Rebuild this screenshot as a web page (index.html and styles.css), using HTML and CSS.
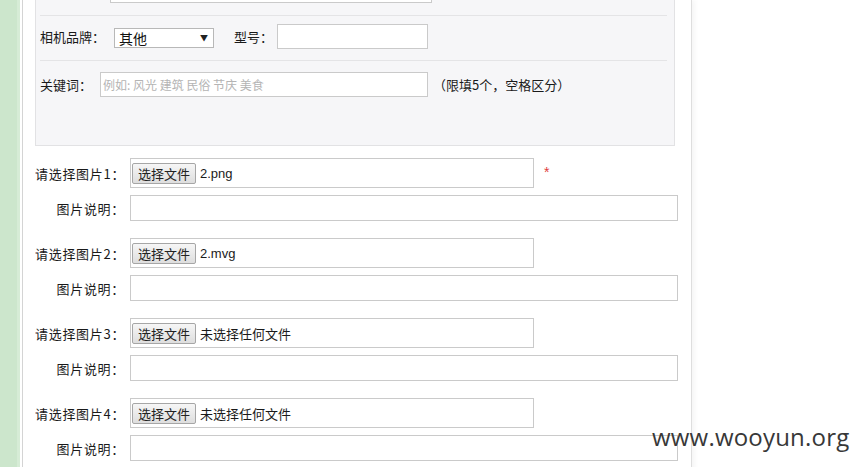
FILE: index.html
```html
<!DOCTYPE html>
<html lang="zh-CN">
<head>
<meta charset="utf-8">
<title>上传图片</title>
<link rel="stylesheet" href="styles.css">
</head>
<body>
<div class="page">
  <div class="sidebar"></div>
  <div class="main">
    <div class="panel">
      <div class="prow prow-first">
        <span class="plabel">拍摄地点：</span>
        <span class="text-input w-loc"></span>
      </div>
      <div class="prow prow-mid">
        <span class="plabel">相机品牌：</span>
        <span class="select"><span class="sel-text">其他</span><span class="sel-arrow">▼</span></span>
        <span class="plabel model-label">型号：</span>
        <span class="text-input w-model"></span>
      </div>
      <div class="prow prow-last">
        <span class="plabel">关键词：</span>
        <span class="text-input w-kw"><span class="placeholder">例如: 风光 建筑 民俗 节庆 美食</span></span>
        <span class="hint">（限填5个，空格区分）</span>
      </div>
    </div>

    <div class="uploads">
      <div class="group">
        <div class="frow">
          <span class="flabel">请选择图片1：</span>
          <span class="file-box"><span class="file-btn">选择文件</span><span class="file-name latin">2.png</span></span>
          <span class="req">*</span>
        </div>
        <div class="frow">
          <span class="flabel">图片说明：</span>
          <span class="text-input desc"></span>
        </div>
      </div>
      <div class="group">
        <div class="frow">
          <span class="flabel">请选择图片2：</span>
          <span class="file-box"><span class="file-btn">选择文件</span><span class="file-name latin">2.mvg</span></span>
        </div>
        <div class="frow">
          <span class="flabel">图片说明：</span>
          <span class="text-input desc"></span>
        </div>
      </div>
      <div class="group">
        <div class="frow">
          <span class="flabel">请选择图片3：</span>
          <span class="file-box"><span class="file-btn">选择文件</span><span class="file-name">未选择任何文件</span></span>
        </div>
        <div class="frow">
          <span class="flabel">图片说明：</span>
          <span class="text-input desc"></span>
        </div>
      </div>
      <div class="group">
        <div class="frow">
          <span class="flabel">请选择图片4：</span>
          <span class="file-box"><span class="file-btn">选择文件</span><span class="file-name">未选择任何文件</span></span>
        </div>
        <div class="frow">
          <span class="flabel">图片说明：</span>
          <span class="text-input desc"></span>
        </div>
      </div>
    </div>
  </div>
</div>
<div class="watermark">www.wooyun.org</div>
</body>
</html>
```

FILE: styles.css
```css
html, body {
  margin: 0;
  padding: 0;
  background: #ffffff;
}
body {
  font-family: "Noto Sans CJK SC", "Liberation Sans", sans-serif;
  font-size: 13px;
  color: #1a1a1a;
  overflow: hidden;
  height: 467px;
  position: relative;
}
.page {
  display: flex;
  align-items: stretch;
  min-height: 700px;
}
.sidebar {
  width: 17px;
  flex: 0 0 17px;
  background: #cce6cc;
  border-right: 3px solid #d6ecd6;
}
.main {
  margin-left: 2px;
  width: 670px;
  flex: 0 0 670px;
  border-left: 1px solid #d4d4d4;
  border-right: 1px solid #dedede;
  box-shadow: 3px 0 5px rgba(0, 0, 0, 0.04);
  padding-left: 12px;
  box-sizing: border-box;
}
.panel {
  margin-top: -40px;
  width: 640px;
  box-sizing: border-box;
  background: #f6f6f8;
  border: 1px solid #e2e2e4;
}
.prow {
  display: flex;
  align-items: center;
  margin: 0 7px 0 4px;
  line-height: 16px;
}
.prow-first {
  padding: 17px 0 12px;
}
.prow-mid {
  border-top: 1px solid #e4e4e6;
  padding: 8px 0 11px;
}
.prow-last {
  border-top: 1px solid #e4e4e6;
  padding: 11px 0 48px;
}
.plabel {
  white-space: nowrap;
}
.prow-first .plabel { width: 70px; }
.prow-mid .plabel:first-child { width: 74px; }
.prow-last .plabel { width: 60px; }
.model-label {
  margin-left: 20px;
  width: 43px;
}
.text-input {
  display: block;
  box-sizing: border-box;
  height: 25px;
  background: #fff;
  border: 1px solid #cacaca;
}
.w-loc { width: 322px; }
.w-model { width: 151px; }
.w-kw {
  width: 328px;
  display: flex;
  align-items: center;
  padding-left: 2px;
}
.placeholder {
  color: #b4b4b4;
  font-size: 12px;
  white-space: nowrap;
}
.hint {
  margin-left: 5px;
  white-space: nowrap;
}
.select {
  box-sizing: border-box;
  width: 100px;
  height: 20px;
  background: #fff;
  border: 1px solid #b8b8b8;
  display: flex;
  align-items: center;
  justify-content: space-between;
  padding: 0 5px 0 4px;
  margin-top: 3px;
}
.sel-text {
  font-size: 14px;
  color: #111;
}
.sel-arrow {
  font-size: 8px;
  color: #222;
}
.uploads {
  padding-top: 12px;
}
.group {
  margin-bottom: 17px;
}
.frow {
  display: flex;
  align-items: center;
}
.frow + .frow {
  margin-top: 7px;
}
.flabel {
  width: 95px;
  flex: 0 0 95px;
  text-align: right;
  padding-right: 5px;
  box-sizing: border-box;
  white-space: nowrap;
  letter-spacing: 0.7px;
}
.file-box {
  box-sizing: border-box;
  width: 404px;
  height: 30px;
  border: 1px solid #cacaca;
  background: #fff;
  display: flex;
  align-items: center;
  padding-left: 1px;
}
.file-btn {
  box-sizing: border-box;
  width: 64px;
  height: 21px;
  border: 1px solid #a6a6a6;
  border-radius: 2px;
  background: linear-gradient(#f6f6f6, #dedede);
  display: flex;
  align-items: center;
  justify-content: center;
  color: #222;
}
.file-name {
  margin-left: 4px;
  white-space: nowrap;
}
.latin {
  font-family: "Liberation Sans", sans-serif;
  font-size: 13px;
}
.req {
  color: #e03c3c;
  margin-left: 10px;
  font-family: "Liberation Sans", sans-serif;
  font-size: 14px;
  margin-top: -2px;
}
.desc {
  width: 548px;
  height: 26px;
}
.watermark {
  position: absolute;
  left: 652px;
  top: 420px;
  font-family: "Open Sans", "Liberation Sans", sans-serif;
  font-size: 24px;
  color: #383838;
  letter-spacing: 0.2px;
}
```
